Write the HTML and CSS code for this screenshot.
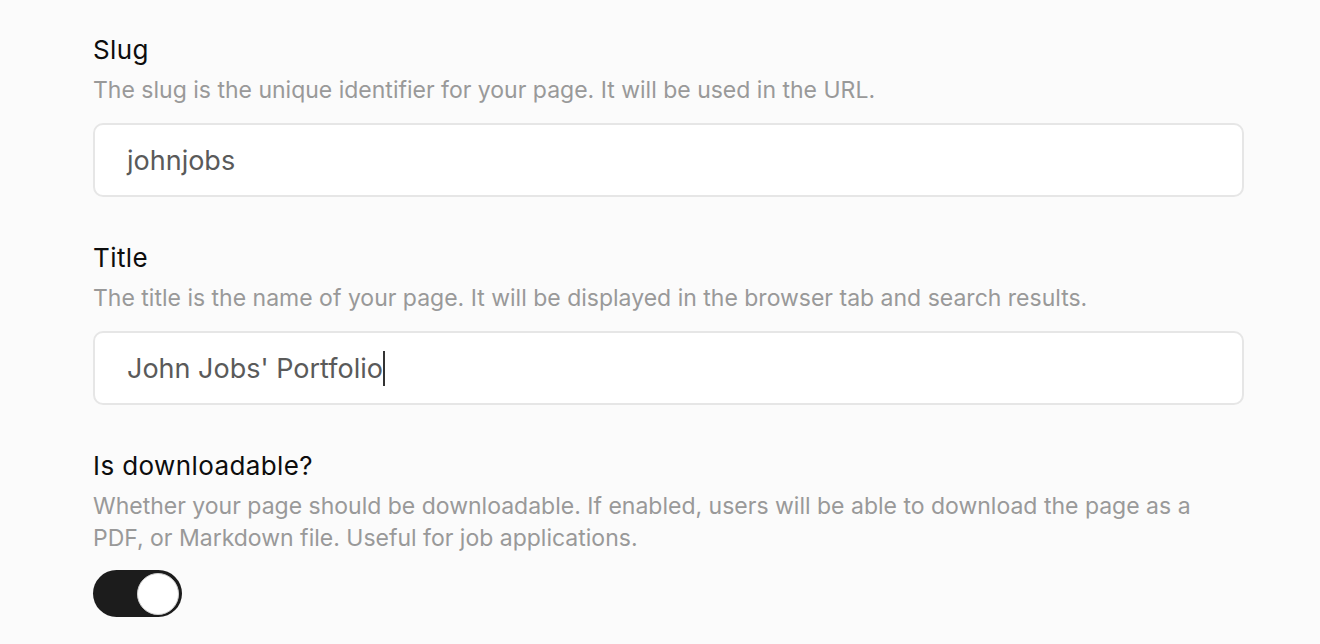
FILE: index.html
```html
<!DOCTYPE html>
<html lang="en">
<head>
<meta charset="utf-8">
<title>Page settings</title>
<link rel="stylesheet" href="styles.css">
</head>
<body>
<main class="form">
  <section class="field">
    <label class="label">Slug</label>
    <p class="desc">The slug is the unique identifier for your page. It will be used in the URL.</p>
    <div class="input"><span class="value">johnjobs</span></div>
  </section>
  <section class="field">
    <label class="label">Title</label>
    <p class="desc">The title is the name of your page. It will be displayed in the browser tab and search results.</p>
    <div class="input"><span class="value">John Jobs' Portfolio</span><span class="caret"></span></div>
  </section>
  <section class="field">
    <label class="label">Is downloadable?</label>
    <p class="desc">Whether your page should be downloadable. If enabled, users will be able to download the page as a PDF, or Markdown file. Useful for job applications.</p>
    <div class="switch"><span class="knob"></span></div>
  </section>
</main>
</body>
</html>
```
FILE: styles.css
```css
html, body {
  margin: 0;
  padding: 0;
  background: #fbfbfb;
}
body {
  font-family: Inter, "Noto Sans", sans-serif;
}
.form {
  width: 1151px;
  padding: 34px 0 0 93px;
  display: flex;
  flex-direction: column;
  gap: 45px;
}
.field {
  display: flex;
  flex-direction: column;
}
.label {
  font-size: 26px;
  line-height: 32px;
  letter-spacing: 0.4px;
  color: #0d0d0d;
  font-weight: 400;
}
.desc {
  margin: 8px 0 0;
  font-size: 23px;
  line-height: 32px;
  color: #999;
  max-width: 1120px;
}
.input {
  margin-top: 17px;
  height: 74px;
  box-sizing: border-box;
  border: 2px solid #e6e6e6;
  border-radius: 10px;
  background: #fff;
  display: flex;
  align-items: center;
  padding: 0 32px;
  font-size: 27px;
  color: #5a5a5a;
}
.caret {
  display: inline-block;
  width: 2px;
  height: 35px;
  background: #333;
}
.switch {
  margin-top: 16px;
  width: 89px;
  height: 47px;
  border-radius: 24px;
  background: #1c1c1c;
  display: flex;
  align-items: center;
  justify-content: flex-end;
  padding: 0 3px;
  box-sizing: border-box;
}
.knob {
  width: 42px;
  height: 42px;
  border-radius: 50%;
  background: #fff;
  box-sizing: border-box;
  border: 1px solid #d0d0d0;
}
```
